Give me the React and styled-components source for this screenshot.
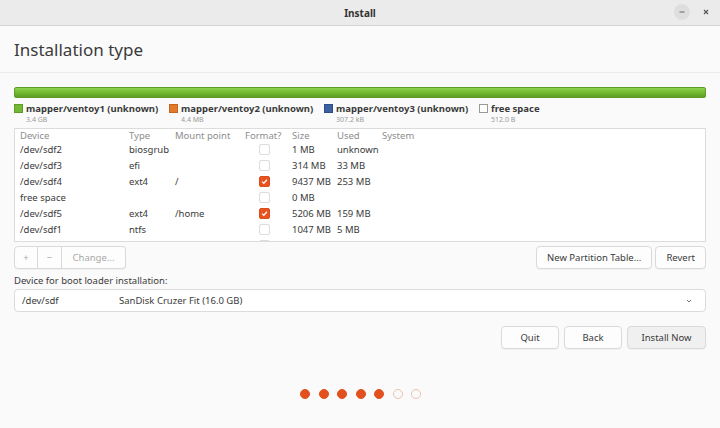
import styled, { createGlobalStyle } from 'styled-components';

const GlobalStyle = createGlobalStyle`
  html, body {
    margin: 0;
    padding: 0;
    background: #fafafa;
  }
  body {
    font-family: 'Noto Sans', 'Open Sans', sans-serif;
    color: #3c3c3c;
  }
`;

const Window = styled.div`
  width: 720px;
  height: 428px;
  display: flex;
  flex-direction: column;
  background: #fafafa;
  overflow: hidden;
`;

const TitleBar = styled.div`
  height: 25px;
  flex: none;
  display: flex;
  align-items: center;
  justify-content: center;
  position: relative;
  background: #ebebeb;
  border-bottom: 1px solid #d6d6d6;
  font-size: 10px;
  font-weight: 700;
  color: #333;
`;

const WinControls = styled.div`
  position: absolute;
  right: 6px;
  top: 4px;
  display: flex;
  gap: 8px;
`;

const WinButton = styled.div`
  width: 16px;
  height: 16px;
  border-radius: 50%;
  background: ${(p) => (p.$plain ? 'transparent' : '#dedede')};
  display: flex;
  align-items: center;
  justify-content: center;
`;

const Header = styled.div`
  height: 46px;
  flex: none;
  display: flex;
  align-items: center;
  padding: 0 14px;
  border-bottom: 1px solid #ececec;
`;

const Title = styled.h1`
  margin: 0;
  font-size: 17px;
  font-weight: 400;
  color: #3a3a3a;
`;

const Body = styled.div`
  padding: 14px 14px 0;
  display: flex;
  flex-direction: column;
`;

const UsageBar = styled.div`
  height: 9px;
  border-radius: 2px;
  background: linear-gradient(#8fd14f, #6fb52c 60%, #5e9f22);
  border: 1px solid #5f9c25;
`;

const Legend = styled.div`
  display: flex;
  margin-top: 5px;
  height: 25px;
`;

const LegendItem = styled.div`
  width: 155px;
  display: grid;
  grid-template-columns: 12px auto;
  grid-template-rows: 11px 10px;
  align-items: center;
`;

const Swatch = styled.span`
  width: 7px;
  height: 7px;
  background: ${(p) => p.$color};
  border: 1px solid ${(p) => p.$border};
`;

const LegendName = styled.span`
  font-size: 9.5px;
  font-weight: 700;
  color: #3a3a3a;
  white-space: nowrap;
`;

const LegendSize = styled.span`
  grid-column: 2;
  font-size: 7px;
  color: #9a9a9a;
`;

const TableBox = styled.div`
  height: 112px;
  background: #fff;
  border: 1px solid #dcdcdc;
  overflow: hidden;
  display: flex;
  flex-direction: column;
`;

const Row = styled.div`
  height: ${(p) => (p.$head ? '12px' : '16px')};
  flex: none;
  display: grid;
  grid-template-columns: 109px 46px 70px 47px 45px 45px 1fr;
  align-items: center;
  padding-left: 5px;
  font-size: 9.5px;
  color: ${(p) => (p.$head ? '#8d8d8d' : '#3a3a3a')};
  white-space: nowrap;
`;

const CheckCell = styled.div`
  display: flex;
  padding-left: 14px;
`;

const Check = styled.div`
  width: 9px;
  height: 9px;
  border-radius: 2px;
  border: 1px solid ${(p) => (p.$on ? '#d9501f' : '#dddddd')};
  background: ${(p) => (p.$on ? '#e8531f' : '#fff')};
  display: flex;
  align-items: center;
  justify-content: center;
`;

const ToolRow = styled.div`
  display: flex;
  justify-content: space-between;
  align-items: center;
  margin-top: 4px;
`;

const Group = styled.div`
  display: flex;
  gap: ${(p) => p.$gap || 0}px;
`;

const Button = styled.button`
  height: 23px;
  padding: 0 ${(p) => (p.$pad === undefined ? 10 : p.$pad)}px;
  min-width: ${(p) => p.$w || 0}px;
  font-family: inherit;
  font-size: 9.5px;
  line-height: 1;
  color: ${(p) => (p.$disabled ? '#a8a8a8' : '#3a3a3a')};
  background: ${(p) => (p.$suggested ? '#f0f0f0' : '#fdfdfd')};
  border: 1px solid #dadada;
  border-radius: 4px;
  box-shadow: 0 1px 1px rgba(0, 0, 0, 0.04);
`;

const GroupButton = styled(Button)`
  border-radius: 0;
  border-left-width: ${(p) => (p.$first ? '1px' : '0')};
  &:first-child {
    border-radius: 4px 0 0 4px;
  }
  &:last-child {
    border-radius: 0 4px 4px 0;
  }
`;

const Label = styled.div`
  font-size: 9.5px;
  line-height: 13px;
  color: #3a3a3a;
  margin-top: 5px;
`;

const Select = styled.div`
  margin-top: 2px;
  height: 21px;
  border: 1px solid #dcdcdc;
  border-radius: 4px;
  background: #fff;
  display: grid;
  grid-template-columns: 97px 1fr 20px;
  align-items: center;
  padding-left: 7px;
  font-size: 9.5px;
  color: #3a3a3a;
`;

const Actions = styled.div`
  display: flex;
  justify-content: flex-end;
  gap: 5px;
  margin-top: 14px;
`;

const Dots = styled.div`
  display: flex;
  justify-content: center;
  gap: 8.5px;
  margin-top: 40px;
  padding-left: 1px;
`;

const Dot = styled.span`
  width: 10px;
  height: 10px;
  border-radius: 50%;
  box-sizing: border-box;
  background: ${(p) => (p.$on ? '#e2501d' : 'transparent')};
  border: 1px solid ${(p) => (p.$on ? '#e2501d' : '#ecc0b0')};
`;

const legend = [
  { name: 'mapper/ventoy1 (unknown)', size: '3.4 GB', color: '#73b936', border: '#5e9c27' },
  { name: 'mapper/ventoy2 (unknown)', size: '4.4 MB', color: '#e07b2a', border: '#c4661c' },
  { name: 'mapper/ventoy3 (unknown)', size: '307.2 kB', color: '#3c5fa0', border: '#2e4c85' },
  { name: 'free space', size: '512.0 B', color: '#fff', border: '#999' },
];

const rows = [
  ['/dev/sdf2', 'biosgrub', '', false, '1 MB', 'unknown'],
  ['/dev/sdf3', 'efi', '', false, '314 MB', '33 MB'],
  ['/dev/sdf4', 'ext4', '/', true, '9437 MB', '253 MB'],
  ['free space', '', '', false, '0 MB', ''],
  ['/dev/sdf5', 'ext4', '/home', true, '5206 MB', '159 MB'],
  ['/dev/sdf1', 'ntfs', '', false, '1047 MB', '5 MB'],
  ['free space', '', '', false, '1 MB', ''],
];

const Tick = () => (
  <svg width="7" height="7" viewBox="0 0 8 8">
    <path d="M1.3 4.2 L3.2 6 L6.8 2" fill="none" stroke="#fff" strokeWidth="1.4" />
  </svg>
);

const App = () => {
  return (
    <>
      <GlobalStyle />
      <Window>
        <TitleBar>
          Install
          <WinControls>
            <WinButton>
              <svg width="8" height="8" viewBox="0 0 8 8">
                <path d="M1.5 4 H6.5" stroke="#666" strokeWidth="1" />
              </svg>
            </WinButton>
            <WinButton $plain>
              <svg width="8" height="8" viewBox="0 0 8 8">
                <path d="M2 2 L6 6 M6 2 L2 6" stroke="#555" strokeWidth="1.1" />
              </svg>
            </WinButton>
          </WinControls>
        </TitleBar>
        <Header>
          <Title>Installation type</Title>
        </Header>
        <Body>
          <UsageBar />
          <Legend>
            {legend.map((l) => (
              <LegendItem key={l.name}>
                <Swatch $color={l.color} $border={l.border} />
                <LegendName>{l.name}</LegendName>
                <LegendSize>{l.size}</LegendSize>
              </LegendItem>
            ))}
          </Legend>
          <TableBox>
            <Row $head>
              <span>Device</span>
              <span>Type</span>
              <span>Mount point</span>
              <span>Format?</span>
              <span>Size</span>
              <span>Used</span>
              <span>System</span>
            </Row>
            {rows.map((r, i) => (
              <Row key={i}>
                <span>{r[0]}</span>
                <span>{r[1]}</span>
                <span>{r[2]}</span>
                <CheckCell>
                  <Check $on={r[3]}>{r[3] && <Tick />}</Check>
                </CheckCell>
                <span>{r[4]}</span>
                <span>{r[5]}</span>
                <span />
              </Row>
            ))}
          </TableBox>
          <ToolRow>
            <Group>
              <GroupButton $first $disabled $pad={0} $w={24}>+</GroupButton>
              <GroupButton $disabled $pad={0} $w={24}>−</GroupButton>
              <GroupButton $disabled $w={64}>Change...</GroupButton>
            </Group>
            <Group $gap={3}>
              <Button>New Partition Table...</Button>
              <Button $w={50}>Revert</Button>
            </Group>
          </ToolRow>
          <Label>Device for boot loader installation:</Label>
          <Select>
            <span>/dev/sdf</span>
            <span>SanDisk Cruzer Fit (16.0 GB)</span>
            <svg width="8" height="8" viewBox="0 0 8 8">
              <path d="M2 3 L4 5 L6 3" fill="none" stroke="#777" strokeWidth="1" />
            </svg>
          </Select>
          <Actions>
            <Button $w={58}>Quit</Button>
            <Button $w={58}>Back</Button>
            <Button $w={79} $suggested>Install Now</Button>
          </Actions>
          <Dots>
            {[1, 1, 1, 1, 1, 0, 0].map((d, i) => (
              <Dot key={i} $on={d === 1} />
            ))}
          </Dots>
        </Body>
      </Window>
    </>
  );
};

export default App;
